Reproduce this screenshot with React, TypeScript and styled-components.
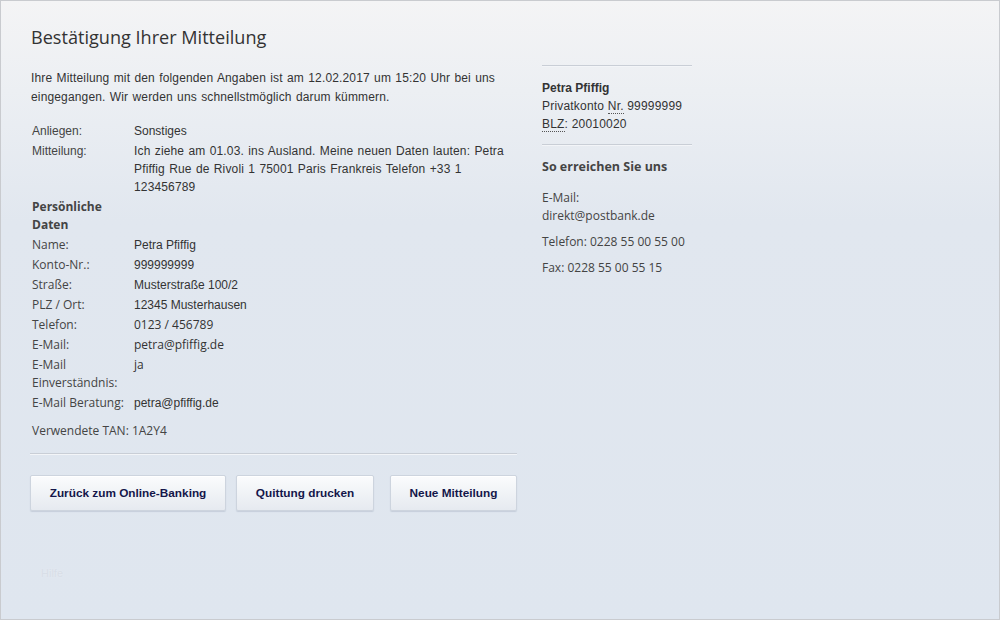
import React from 'react';
import styled, { createGlobalStyle } from 'styled-components';

const GlobalStyle = createGlobalStyle`
  * { box-sizing: border-box; }
  html, body { margin: 0; padding: 0; }
  body { font-family: "Liberation Sans", Arial, sans-serif; color: #333; }
`;

const segoe = '"Open Sans", "Noto Sans", sans-serif';
const arial = '"Liberation Sans", Arial, sans-serif';

const Frame = styled.div`
  width: 1000px;
  height: 620px;
  border: 1px solid #c9cbcf;
  background: linear-gradient(180deg, #f4f4f5 0px, #eceff3 90px, #e1e7ef 220px, #dfe6ef 620px);
  padding: 23px 29px 0 29px;
  position: relative;
  overflow: hidden;
`;

const Title = styled.h1`
  margin: 0 0 0 1px;
  font-family: ${segoe};
  font-weight: 400;
  font-size: 18.1px;
  line-height: 26px;
  color: #333;
`;

const Columns = styled.div`
  display: flex;
  gap: 25px;
  margin-top: 15px;
`;

const Main = styled.div`
  width: 487px;
  padding-top: 4px;
`;

const Intro = styled.p`
  margin: 0 0 0 1px;
  font-size: 12px;
  line-height: 19px;
  letter-spacing: 0.15px;
  word-spacing: 0.8px;
  color: #333;
`;

const Table = styled.table`
  border-collapse: collapse;
  table-layout: fixed;
  width: 485px;
  margin-top: 14px;
  margin-left: 1px;
`;

const Label = styled.td<{ $arial?: boolean; $bold?: boolean }>`
  padding: 1px 0 1px 1px;
  vertical-align: top;
  font-family: ${p => (p.$arial ? arial : segoe)};
  font-size: 12px;
  font-weight: ${p => (p.$bold ? 700 : 400)};
  line-height: 18px;
  color: #444;
`;

const Value = styled.td<{ $arial?: boolean; $text?: boolean }>`
  padding: 1px 0;
  vertical-align: top;
  font-family: ${p => (p.$arial ? arial : segoe)};
  font-size: 12px;
  line-height: 18px;
  color: #333;
  letter-spacing: ${p => (p.$text ? '0.15px' : '0')};
  word-spacing: ${p => (p.$text ? '0.8px' : '0')};
`;

const Tan = styled.div`
  margin: 9px 0 0 2px;
  font-family: ${segoe};
  font-size: 12px;
  line-height: 18px;
  color: #444;
`;

const Rule = styled.hr<{ $width?: number }>`
  border: 0;
  border-top: 1px solid #c9ced6;
  border-bottom: 1px solid #f3f5f8;
  margin: 0;
  width: ${p => (p.$width ? `${p.$width}px` : '100%')};
`;

const MainRule = styled(Rule)`
  margin-top: 13px;
`;

const Buttons = styled.div`
  display: flex;
  margin-top: 20px;
`;

const Button = styled.button<{ $w: number; $ml?: number }>`
  width: ${p => p.$w}px;
  margin-left: ${p => p.$ml ?? 0}px;
  height: 36px;
  border: 1px solid #cdd4de;
  border-radius: 2px;
  background: linear-gradient(180deg, #fbfcfd 0%, #eef1f5 60%, #e6eaf0 100%);
  box-shadow: 0 1px 1px rgba(120, 135, 160, 0.25), inset 0 1px 0 #fff;
  font-family: ${arial};
  font-size: 11.8px;
  font-weight: 700;
  color: #14164a;
  cursor: pointer;
  padding: 0;
`;

const Side = styled.aside`
  width: 150px;
`;

const SideBlock = styled.div`
  padding: 12px 0 11px 0;
  font-size: 12px;
  line-height: 18px;
  letter-spacing: 0.2px;
  color: #333;
`;

const Strong = styled.div`
  font-weight: 700;
  letter-spacing: 0;
  color: #333;
`;

const Abbr = styled.abbr`
  text-decoration: none;
  border-bottom: 1px dotted #555;
`;

const SideHeading = styled.h3`
  margin: 12px 0 0 0;
  font-family: ${segoe};
  font-size: 12.5px;
  font-weight: 700;
  line-height: 18px;
  color: #444;
`;

const Contact = styled.p<{ $mt: number }>`
  margin: ${p => p.$mt}px 0 0 0;
  font-family: ${segoe};
  font-size: 12px;
  line-height: 18px;
  color: #444;
`;

const Faint = styled.div`
  position: absolute;
  left: 40px;
  top: 566px;
  font-size: 11px;
  color: #d8dee7;
  text-shadow: 0 0 2px #e9edf3;
`;

type Row = { label: React.ReactNode; value?: React.ReactNode; arial?: boolean; labelArial?: boolean; bold?: boolean; text?: boolean };

const rows: Row[] = [
  { label: 'Anliegen:', value: 'Sonstiges', arial: true, labelArial: true },
  {
    label: 'Mitteilung:',
    value: 'Ich ziehe am 01.03. ins Ausland. Meine neuen Daten lauten: Petra Pfiffig Rue de Rivoli 1 75001 Paris Frankreis Telefon +33 1 123456789',
    arial: true,
    labelArial: true,
    text: true,
  },
  { label: 'Persönliche Daten', bold: true },
  { label: 'Name:', value: 'Petra Pfiffig', arial: true },
  { label: 'Konto-Nr.:', value: '999999999', arial: true },
  { label: 'Straße:', value: 'Musterstraße 100/2', arial: true },
  { label: 'PLZ / Ort:', value: '12345 Musterhausen', arial: true },
  { label: 'Telefon:', value: '0123 / 456789' },
  { label: 'E-Mail:', value: 'petra@pfiffig.de' },
  { label: 'E-Mail Einverständnis:', value: 'ja' },
  { label: 'E-Mail Beratung:', value: 'petra@pfiffig.de', arial: true },
];

export default function App() {
  return (
    <>
      <GlobalStyle />
      <Frame>
        <Title>Bestätigung Ihrer Mitteilung</Title>
        <Columns>
          <Main>
            <Intro>
              Ihre Mitteilung mit den folgenden Angaben ist am 12.02.2017 um 15:20 Uhr bei uns eingegangen. Wir werden
              uns schnellstmöglich darum kümmern.
            </Intro>
            <Table>
              <colgroup>
                <col style={{ width: 103 }} />
                <col />
              </colgroup>
              <tbody>
                {rows.map((r, i) => (
                  <tr key={i}>
                    <Label $arial={r.labelArial} $bold={r.bold}>
                      {r.label}
                    </Label>
                    <Value $arial={r.arial} $text={r.text}>
                      {r.value}
                    </Value>
                  </tr>
                ))}
              </tbody>
            </Table>
            <Tan>Verwendete TAN: 1A2Y4</Tan>
            <MainRule />
            <Buttons>
              <Button $w={196}>Zurück zum Online-Banking</Button>
              <Button $w={138} $ml={10}>
                Quittung drucken
              </Button>
              <Button $w={127} $ml={16}>
                Neue Mitteilung
              </Button>
            </Buttons>
          </Main>
          <Side>
            <Rule $width={150} />
            <SideBlock>
              <Strong>Petra Pfiffig</Strong>
              <div>
                Privatkonto <Abbr title="Nummer">Nr.</Abbr> 99999999
              </div>
              <div>
                <Abbr title="Bankleitzahl">BLZ</Abbr>: 20010020
              </div>
            </SideBlock>
            <Rule $width={150} />
            <SideHeading>So erreichen Sie uns</SideHeading>
            <Contact $mt={13}>
              E-Mail:
              <br />
              direkt@postbank.de
            </Contact>
            <Contact $mt={8}>Telefon: 0228 55 00 55 00</Contact>
            <Contact $mt={8}>Fax: 0228 55 00 55 15</Contact>
          </Side>
        </Columns>
        <Faint>Hilfe</Faint>
      </Frame>
    </>
  );
}
